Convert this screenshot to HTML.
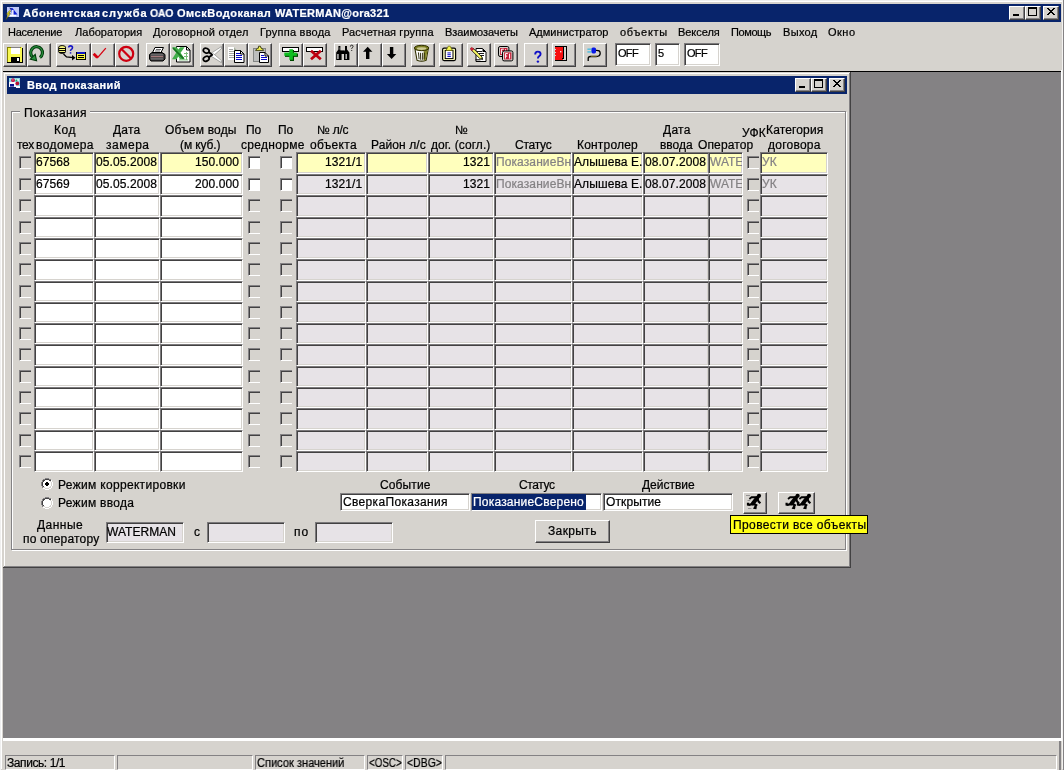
<!DOCTYPE html>
<html><head><meta charset="utf-8"><title>Ввод показаний</title>
<style>
html,body{margin:0;padding:0;}
body{width:1064px;height:770px;overflow:hidden;background:#D6D3CE;position:relative;font-family:"Liberation Sans",sans-serif;font-size:12px;}
div,span{box-sizing:content-box;}
.t{position:absolute;white-space:nowrap;overflow:visible;will-change:transform;-webkit-text-stroke:0.22px;}
.sk{position:absolute;border-style:solid;border-width:1px;border-color:#7B797B #fff #fff #7B797B;box-shadow:inset 1px 1px 0 #424142, inset -1px -1px 0 #D6D3CE;overflow:hidden;}
.sk2{position:absolute;border-style:solid;border-width:1px;border-color:#848284 #fff #fff #848284;box-shadow:inset 1px 1px 0 #424142, inset -1px -1px 0 #D6D3CE;overflow:hidden;}
.rb{position:absolute;border-style:solid;border-width:1px;border-color:#fff #424142 #424142 #fff;box-shadow:inset -1px -1px 0 #848284;background:#D6D3CE;overflow:hidden;}
.cb{position:absolute;width:11px;height:11px;border-style:solid;border-width:1px 0 1px 1px;border-color:#848284 #fff #fff #848284;box-shadow:inset 1px 1px 0 #424142;}
.capb{position:absolute;width:14px;height:12px;border-style:solid;border-width:1px;border-color:#fff #424142 #424142 #fff;box-shadow:inset -1px -1px 0 #848284, inset 1px 1px 0 #D6D3CE;background:#D6D3CE;}
.ft{position:absolute;white-space:nowrap;font-size:12px;line-height:14px;top:2px;letter-spacing:0.1px;will-change:transform;-webkit-text-stroke:0.22px;}
svg{position:absolute;overflow:visible;}
</style></head><body>

<div class="" style="position:absolute;left:0px;top:0px;width:1064px;height:770px;background:#D6D3CE;"></div>
<div class="" style="position:absolute;left:0px;top:0px;width:1064px;height:1px;background:#EFEFEF;"></div>
<div class="" style="position:absolute;left:0px;top:0px;width:1px;height:770px;background:#EFEFEF;"></div>
<div class="" style="position:absolute;left:1px;top:1px;width:1062px;height:1px;background:#FFFFFF;"></div>
<div class="" style="position:absolute;left:1px;top:1px;width:1px;height:768px;background:#FFFFFF;"></div>
<div class="" style="position:absolute;left:1063px;top:0px;width:1px;height:770px;background:#848284;"></div>
<div class="" style="position:absolute;left:1062px;top:1px;width:1px;height:768px;background:#F3F2F0;"></div>
<div class="" style="position:absolute;left:3px;top:4px;width:1058px;height:18px;background:#08246B;"></div>
<span class="t " style="left:22.60px;top:7px;font-size:11px;line-height:13px;color:#fff;font-weight:bold;letter-spacing:0.678px;">Абонентская</span>
<span class="t " style="left:102.25px;top:7px;font-size:11px;line-height:13px;color:#fff;font-weight:bold;letter-spacing:0.963px;">служба</span>
<span class="t " style="left:150.10px;top:7px;font-size:11px;line-height:13px;color:#fff;font-weight:bold;letter-spacing:0.000px;transform:scaleX(0.9518);transform-origin:0 0;">ОАО</span>
<span class="t " style="left:177.25px;top:7px;font-size:11px;line-height:13px;color:#fff;font-weight:bold;letter-spacing:0.507px;">ОмскВодоканал</span>
<span class="t " style="left:274.50px;top:7px;font-size:11px;line-height:13px;color:#fff;font-weight:bold;letter-spacing:0.275px;">WATERMAN@ora321</span>
<div class="capb" style="left:1009px;top:6px;">
<div style="position:absolute;left:3px;top:7px;width:6px;height:2px;background:#000"></div>
</div>
<div class="capb" style="left:1025px;top:6px;">
<div style="position:absolute;left:2px;top:0px;width:7px;height:6px;border:1px solid #000;border-top-width:2px;"></div>
</div>
<div class="capb" style="left:1043px;top:6px;">
<svg width="8" height="7" style="left:3px;top:1px" viewBox="0 0 8 7" shape-rendering="crispEdges"><path d="M0 0h2v1h1v1h2v-1h1v-1h2v1h-1v1h-1v1h-1v1h1v1h1v1h1v1h-2v-1h-1v-1h-2v1h-1v1h-2v-1h1v-1h1v-1h1v-1h-1v-1h-1v-1h-1z" fill="#000"/></svg>
</div>
<span class="t " style="left:8.25px;top:26px;font-size:11px;line-height:13px;color:#000;letter-spacing:-0.242px;">Население</span>
<span class="t " style="left:74.50px;top:26px;font-size:11px;line-height:13px;color:#000;letter-spacing:0.025px;">Лаборатория</span>
<span class="t " style="left:153.25px;top:26px;font-size:11px;line-height:13px;color:#000;letter-spacing:0.228px;">Договорной отдел</span>
<span class="t " style="left:260.00px;top:26px;font-size:11px;line-height:13px;color:#000;letter-spacing:0.236px;">Группа ввода</span>
<span class="t " style="left:342.00px;top:26px;font-size:11px;line-height:13px;color:#000;letter-spacing:0.118px;">Расчетная группа</span>
<span class="t " style="left:445.00px;top:26px;font-size:11px;line-height:13px;color:#000;letter-spacing:-0.050px;">Взаимозачеты</span>
<span class="t " style="left:529.00px;top:26px;font-size:11px;line-height:13px;color:#000;letter-spacing:0.010px;">Администратор</span>
<span class="t " style="left:620.00px;top:26px;font-size:11px;line-height:13px;color:#000;letter-spacing:0.719px;">объекты</span>
<span class="t " style="left:678.25px;top:26px;font-size:11px;line-height:13px;color:#000;letter-spacing:-0.047px;">Векселя</span>
<span class="t " style="left:731.00px;top:26px;font-size:11px;line-height:13px;color:#000;letter-spacing:-0.400px;">Помощь</span>
<span class="t " style="left:782.50px;top:26px;font-size:11px;line-height:13px;color:#000;letter-spacing:0.332px;">Выход</span>
<span class="t " style="left:827.75px;top:26px;font-size:11px;line-height:13px;color:#000;letter-spacing:0.479px;">Окно</span>
<div class="rb" style="left:3px;top:43px;width:22px;height:22px;"><svg width="22" height="22" viewBox="4 44 22 22" style="left:0px;top:0px" shape-rendering="crispEdges"><path d="M7 47h14l2 2v14h-16z" fill="#000"/><path d="M7 47h14l1 1v14h-15z" fill="#F7F752"/><rect x="7" y="47" width="1" height="15" fill="#848200"/><rect x="7" y="47" width="14" height="1" fill="#848200"/><rect x="11" y="47" width="9" height="7" fill="#fff"/><rect x="11" y="47" width="9" height="1" fill="#848284"/><rect x="11" y="57" width="9" height="5" fill="#000"/><rect x="17" y="58" width="2" height="3" fill="#fff"/></svg></div>
<div class="rb" style="left:27px;top:43px;width:22px;height:22px;"><svg width="22" height="22" viewBox="28 44 22 22" style="left:0px;top:0px"><path d="M39.9 57.5 A5.9 5.9 0 1 0 32.4 56.8" stroke="#00390A" stroke-width="3.2" fill="none"/><path d="M39.9 57.5 A5.9 5.9 0 1 0 32.4 56.8" stroke="#2B9340" stroke-width="1.2" fill="none"/><path d="M35.2 54.3 L30.3 59.2 L36.6 60.7 Z" fill="#2B9340" stroke="#00390A" stroke-width="1.1" stroke-linejoin="miter"/></svg></div>
<div class="rb" style="left:56px;top:43px;width:33px;height:22px;"><svg width="33" height="22" viewBox="57 44 33 22" style="left:0px;top:0px"><path d="M58.7 47.2 q0 -1.6 3.4 -1.6 q3.4 0 3.4 1.6 v4.6 q0 1.6 -3.4 1.6 q-3.4 0 -3.4 -1.6z" fill="#F7F77B" stroke="#000" stroke-width="1"/><rect x="59" y="48" width="6" height="1" fill="#000"/><rect x="59" y="50" width="6" height="1" fill="#000"/><rect x="59" y="52" width="6" height="1" fill="#000"/><path d="M68.7 47.6 q0 -1.7 1.8 -1.7 q2 0 2 1.7 q0 1.2 -1.1 1.8 q-.9 .5 -.9 1.6" stroke="#1818C6" stroke-width="1.6" fill="none"/><rect x="69.8" y="52.2" width="1.5" height="1.4" fill="#1818C6"/><path d="M63.5 54 l3 3 l7 0.7" stroke="#000" stroke-width="1.3" fill="none"/><path d="M72 55 l3.5 2.8 l-3.5 2.8z" fill="#000"/><rect x="76" y="52" width="10" height="8" fill="#000"/><rect x="77" y="52" width="8" height="2" fill="#1018C6"/><rect x="77" y="54" width="8" height="5" fill="#F7F742"/><rect x="78" y="55" width="6" height="1" fill="#000"/><rect x="78" y="57" width="6" height="1" fill="#000"/></svg></div>
<div class="rb" style="left:91px;top:43px;width:22px;height:22px;"><svg width="22" height="22" viewBox="92 44 22 22" style="left:0px;top:0px"><path d="M97.2 58.2 L105.8 48.2" stroke="#D60010" stroke-width="1.3" fill="none"/><path d="M93.6 53.8 L97.4 57.6" stroke="#D60010" stroke-width="2.8" fill="none"/></svg></div>
<div class="rb" style="left:115px;top:43px;width:22px;height:22px;"><svg width="22" height="22" viewBox="116 44 22 22" style="left:0px;top:0px"><circle cx="126.2" cy="53.8" r="7" stroke="#CE0010" stroke-width="2.2" fill="none"/><path d="M121.2 48.8 L131.2 58.8" stroke="#CE0010" stroke-width="2.2"/></svg></div>
<div class="rb" style="left:146px;top:43px;width:22px;height:22px;"><svg width="22" height="22" viewBox="147 44 22 22" style="left:0px;top:0px"><path d="M152.5 52.5 L155 47.5 L163.5 47.5 L161 52.5Z" fill="#fff" stroke="#000" stroke-width="1"/><path d="M156 49.5h5M155 51h5" stroke="#424142" stroke-width=".8"/><path d="M149.5 54.5 L152 52.5 L162 52.5 L165 54.5 L165 59 L163 61 L151 61 L149.5 59Z" fill="#424142" stroke="#000" stroke-width="1"/><rect x="151" y="56" width="12" height="1.2" fill="#A5797B"/><rect x="151" y="58.4" width="12" height="1" fill="#848284"/><rect x="151" y="54.4" width="12" height="0.9" fill="#848284"/></svg></div>
<div class="rb" style="left:170px;top:43px;width:22px;height:22px;"><svg width="22" height="22" viewBox="171 44 22 22" style="left:0px;top:0px"><path d="M176.5 46.5 h10 l3.5 3.5 v12 h-13.5z" fill="#fff" stroke="#000" stroke-width="1"/><path d="M186.5 46.5 v3.5 h3.5" fill="none" stroke="#000" stroke-width="1"/><rect x="184" y="53" width="4" height="1" fill="#7BBE7B"/><rect x="184" y="56" width="4" height="1" fill="#7BBE7B"/><rect x="179" y="59.4" width="9" height="1" fill="#7BBE7B"/><rect x="186" y="52" width="1" height="8" fill="#7BBE7B"/><path d="M172 47.2 L176.6 47.2 L178.4 49.6 L180.2 47.2 L184.6 47.2 L180.6 52.8 L184.8 59.2 L180 59.2 L178.3 56.4 L176.6 59.2 L172 59.2 L176.1 52.8Z" fill="#42AE4A"/><path d="M173 48 L183.6 58.6" stroke="#187321" stroke-width="1.7"/></svg></div>
<div class="rb" style="left:200px;top:43px;width:22px;height:22px;"><svg width="22" height="22" viewBox="201 44 22 22" style="left:0px;top:0px"><path d="M210.6 53.6 L221.4 46.6 L221.4 48.6 L213.6 55.6Z" fill="#fff" stroke="#636563" stroke-width=".5"/><path d="M210.6 55.8 L213.6 53.8 L221.4 60.6 L221.4 62.6Z" fill="#fff" stroke="#636563" stroke-width=".5"/><ellipse cx="206.2" cy="50.6" rx="3" ry="2.3" stroke="#000" stroke-width="1.7" fill="none" transform="rotate(25 206.2 50.6)"/><ellipse cx="206.2" cy="58.8" rx="3" ry="2.3" stroke="#000" stroke-width="1.7" fill="none" transform="rotate(-25 206.2 58.8)"/><path d="M208.6 52 L212.6 55 M208.6 57.4 L212.6 54.4" stroke="#000" stroke-width="1.9"/></svg></div>
<div class="rb" style="left:224px;top:43px;width:22px;height:22px;"><svg width="22" height="22" viewBox="225 44 22 22" style="left:0px;top:0px"><path d="M228 47 h6 l3 3 v10 h-9z" fill="#fff"/><path d="M234 47 l3 3 h-3z" fill="#A5AE9C"/><rect x="229" y="49" width="4" height="1" fill="#A5A6A5"/><rect x="229" y="51" width="5" height="1" fill="#A5A6A5"/><rect x="229" y="53" width="5" height="1" fill="#A5A6A5"/><rect x="229" y="55" width="5" height="1" fill="#A5A6A5"/><rect x="229" y="57" width="5" height="1" fill="#A5A6A5"/><path d="M234.5 50.5 h6 l3.5 3.5 v8.5 h-9.5z" fill="#fff" stroke="#000" stroke-width="1"/><path d="M240.5 50.5 v3.5 h3.5" fill="none" stroke="#000" stroke-width="1"/><rect x="236" y="53" width="4" height="1" fill="#0808C6"/><rect x="236" y="55" width="6" height="1" fill="#0808C6"/><rect x="236" y="57" width="6" height="1" fill="#0808C6"/><rect x="236" y="59" width="6" height="1" fill="#0808C6"/></svg></div>
<div class="rb" style="left:248px;top:43px;width:22px;height:22px;"><svg width="22" height="22" viewBox="249 44 22 22" style="left:0px;top:0px"><rect x="253" y="48" width="13" height="14" fill="#848684"/><rect x="254" y="49" width="11" height="12" fill="#BDBEBD"/><path d="M255.6 50.4 L257.4 48.2 h1 L258.6 46.2 h1.8 L261 48.2 h1 L263.6 50.4Z" fill="#F7F752" stroke="#212100" stroke-width=".8"/><path d="M259.5 52.5 h5.5 l3.5 3.5 v6.5 h-9z" fill="#fff" stroke="#000" stroke-width="1"/><path d="M265 52.5 v3.5 h3.5" fill="none" stroke="#000" stroke-width="1"/><rect x="261" y="55" width="3" height="1" fill="#0808C6"/><rect x="261" y="57" width="6" height="1" fill="#0808C6"/><rect x="261" y="59" width="6" height="1" fill="#0808C6"/></svg></div>
<div class="rb" style="left:279px;top:43px;width:22px;height:22px;"><svg width="22" height="22" viewBox="280 44 22 22" style="left:0px;top:0px"><rect x="282" y="47" width="17" height="5" fill="#000"/><rect x="283" y="48" width="15" height="3" fill="#fff"/><rect x="285" y="53.5" width="13" height="3.4" fill="#004A00"/><rect x="290" y="50" width="4" height="11" fill="#004A00"/><rect x="284.3" y="52.6" width="12.5" height="3.2" fill="#10BE21"/><rect x="289.3" y="49.2" width="3.6" height="10.6" fill="#10BE21"/></svg></div>
<div class="rb" style="left:303px;top:43px;width:22px;height:22px;"><svg width="22" height="22" viewBox="304 44 22 22" style="left:0px;top:0px"><rect x="306" y="47" width="17" height="5" fill="#000"/><rect x="307" y="48" width="15" height="3" fill="#fff"/><path d="M311 50.8 L320.8 59.2 M320.8 50.8 L311 59.2" stroke="#BD0010" stroke-width="2.8"/></svg></div>
<div class="rb" style="left:334px;top:43px;width:22px;height:22px;"><svg width="22" height="22" viewBox="335 44 22 22" style="left:0px;top:0px"><path d="M338.4 46 h2 v4 l1.2 1.6 v8.4 h-5.4 v-7.6 l2.2-3z" fill="#000"/><path d="M345 46 h2 v3.4 l2.4 3 v7.6 h-5.4 v-8.4 l1-1.6z" fill="#000"/><rect x="341" y="50.4" width="3.4" height="3.6" fill="#000"/><rect x="337.4" y="54" width="1.1" height="5" fill="#fff"/><rect x="345.6" y="54" width="1.1" height="5" fill="#fff"/><rect x="339.6" y="47.4" width="0.8" height="2.4" fill="#9C9E9C"/><path d="M350.4 46.6 q0 -1.5 1.3 -1.5 q1.4 0 1.4 1.3 q0 .9 -1.3 1.6 v.8" stroke="#000" stroke-width=".8" fill="none"/><rect x="351.3" y="50" width="0.9" height="0.9" fill="#000"/></svg></div>
<div class="rb" style="left:358px;top:43px;width:22px;height:22px;"><svg width="22" height="22" viewBox="359 44 22 22" style="left:0px;top:0px"><path d="M367.7 46.8 L372.4 51.8 L369.4 51.8 L369.4 59 L366 59 L366 51.8 L363 51.8Z" fill="#000"/></svg></div>
<div class="rb" style="left:382px;top:43px;width:22px;height:22px;"><svg width="22" height="22" viewBox="383 44 22 22" style="left:0px;top:0px"><path d="M391.6 59 L396.3 54 L393.3 54 L393.3 47 L389.9 47 L389.9 54 L386.9 54Z" fill="#000"/></svg></div>
<div class="rb" style="left:411px;top:43px;width:22px;height:22px;"><svg width="22" height="22" viewBox="412 44 22 22" style="left:0px;top:0px"><path d="M415 49 L417 60.2 q4.6 1.8 9.2 0 L428.2 49Z" fill="#fff" stroke="#313000" stroke-width="1.1"/><path d="M423.6 50.6 L427.8 49.4 L425.8 59.9 q-1 .5 -2.2 .7z" fill="#84862A"/><ellipse cx="421.6" cy="48" rx="7.2" ry="2.7" fill="#7B7D21" stroke="#313000" stroke-width="1"/><ellipse cx="421.6" cy="48.6" rx="4.8" ry="1.3" fill="#CECB94"/><path d="M418.4 52.4 l.7 6.8 M420.4 52.8 l.3 7 M422.4 52.8 v7 M424.4 52.6 l-.3 6.8" stroke="#212000" stroke-width=".9"/></svg></div>
<div class="rb" style="left:439px;top:43px;width:22px;height:22px;"><svg width="22" height="22" viewBox="440 44 22 22" style="left:0px;top:0px"><rect x="442.6" y="48.2" width="13" height="12.4" rx="1.5" fill="#FFFFBD" stroke="#000" stroke-width="1.2"/><rect x="445.2" y="50.4" width="7.8" height="8.2" fill="#fff" stroke="#000" stroke-width="1"/><path d="M446 50.4 L447.6 47.6 L448.2 46.2 h2 l.6 1.4 L452.4 50.4Z" fill="#F7F752" stroke="#636300" stroke-width=".7"/><rect x="447.4" y="52.4" width="3.4" height="1" fill="#1010C6"/><rect x="447.4" y="54.2" width="3.4" height="1" fill="#1010C6"/><rect x="447.4" y="56" width="3.4" height="1" fill="#1010C6"/></svg></div>
<div class="rb" style="left:467px;top:43px;width:22px;height:22px;"><svg width="22" height="22" viewBox="468 44 22 22" style="left:0px;top:0px"><path d="M476 48.5 h6.5 l3.5 3.5 v9.5 h-10z" fill="#fff" stroke="#000" stroke-width="1"/><path d="M482.5 48.5 v3.5 h3.5z" fill="#000"/><rect x="477" y="51" width="5" height="0.9" fill="#000"/><rect x="479" y="53" width="5" height="0.9" fill="#000"/><rect x="480" y="55" width="4" height="0.9" fill="#000"/><rect x="475.5" y="59.3" width="5" height="1" fill="#000"/><path d="M471.6 50.4 L473.4 48.6 L482 57 L482.6 59.6 L480 58.8Z" fill="#F7F763" stroke="#000" stroke-width=".8"/><path d="M470.3 49 q.2 -1.4 1.6 -1.6 L473.8 49 L472 50.8Z" fill="#D62031" stroke="#94182A" stroke-width=".6"/><path d="M481 58.2 L482.6 59.6 L482.2 57.6Z" fill="#000"/></svg></div>
<div class="rb" style="left:494px;top:43px;width:22px;height:22px;"><svg width="22" height="22" viewBox="495 44 22 22" style="left:0px;top:0px"><rect x="498.5" y="46.5" width="10.4" height="10" rx="1.6" fill="#D6D3CE" stroke="#000" stroke-width="1"/><rect x="500" y="48" width="7.4" height="7" fill="#C62039"/><path d="M501.4 54.2 v-5 h2.4 M501.4 51.7 h1.8 M505.6 49.2 v5" stroke="#fff" stroke-width="1" fill="none"/><rect x="502.5" y="50.9" width="10.4" height="10" rx="1.6" fill="#D6D3CE" stroke="#000" stroke-width="1"/><rect x="504" y="52.4" width="7.4" height="7" fill="#C62039"/><path d="M505.4 58.599999999999994 v-5 h2.4 M505.4 56.1 h1.8 M509.6 53.6 v5" stroke="#fff" stroke-width="1" fill="none"/></svg></div>
<div class="rb" style="left:524px;top:43px;width:22px;height:22px;"><svg width="22" height="22" viewBox="525 44 22 22" style="left:0px;top:0px"><path d="M535.2 54.4 q0 -2.8 2.6 -2.8 q2.8 0 2.8 2.5 q0 1.5 -1.6 2.3 q-1.1 .6 -1.1 2.2" stroke="#1010C6" stroke-width="1.9" fill="none"/><circle cx="537.9" cy="61.6" r="1.2" fill="#1010C6"/></svg></div>
<div class="rb" style="left:552px;top:43px;width:22px;height:22px;"><svg width="22" height="22" viewBox="553 44 22 22" style="left:0px;top:0px"><rect x="555" y="46" width="12" height="15" fill="#000"/><rect x="556" y="47" width="10" height="13" fill="#D6D3CE"/><rect x="555" y="47" width="8" height="13" fill="#F71010"/><rect x="563" y="47" width="1" height="12" fill="#000"/><rect x="555" y="49" width="1" height="1" fill="#D6D3CE"/><rect x="555" y="52" width="1" height="1" fill="#D6D3CE"/><rect x="555" y="55" width="1" height="1" fill="#D6D3CE"/><rect x="560" y="51" width="1.4" height="1.4" fill="#FFD6D6"/><rect x="562" y="58" width="2" height="1" fill="#000"/></svg></div>
<div class="rb" style="left:583px;top:43px;width:22px;height:22px;"><svg width="22" height="22" viewBox="584 44 22 22" style="left:0px;top:0px"><path d="M596 50.3 q4.2 -.3 4.2 3 q0 3.2 -4 3.2 h-5.6 q-2.4 0 -2.4 2 v2.6" stroke="#000" stroke-width="1.3" fill="none"/><path d="M590.8 56.3 h6" stroke="#B5A642" stroke-width=".7"/><rect x="591.4" y="47.4" width="4.6" height="6" rx="1.6" fill="#0818E7"/><rect x="587.4" y="48.6" width="4" height="1.1" fill="#21B6E7"/><rect x="587.4" y="51.4" width="4" height="1.1" fill="#21B6E7"/></svg></div>
<div class="sk" style="left:615px;top:43px;width:34px;height:21px;background:#fff;"><span class="ft" style="left:2px;top:2px;font-size:11px;letter-spacing:-0.7px;">OFF</span></div>
<div class="sk" style="left:655px;top:43px;width:23px;height:21px;background:#fff;"><span class="ft" style="left:2px;top:2px;font-size:11px;letter-spacing:-0.7px;">5</span></div>
<div class="sk" style="left:684px;top:43px;width:34px;height:21px;background:#fff;"><span class="ft" style="left:2px;top:2px;font-size:11px;letter-spacing:-0.7px;">OFF</span></div>
<div class="" style="position:absolute;left:3px;top:71px;width:1058px;height:1px;background:#000;"></div>
<div class="" style="position:absolute;left:3px;top:72px;width:1058px;height:666px;background:#848284;"></div>
<div class="" style="position:absolute;left:1061px;top:70px;width:1px;height:670px;background:#fff;"></div>
<div class="" style="position:absolute;left:3px;top:738px;width:1059px;height:3px;background:#fff;"></div>
<div class="" style="position:absolute;left:3px;top:72px;width:848px;height:496px;background:#D6D3CE;"></div>
<div class="" style="position:absolute;left:3px;top:72px;width:848px;height:1px;background:#D6D3CE;"></div>
<div class="" style="position:absolute;left:3px;top:72px;width:1px;height:496px;background:#D6D3CE;"></div>
<div class="" style="position:absolute;left:4px;top:73px;width:846px;height:1px;background:#fff;"></div>
<div class="" style="position:absolute;left:4px;top:73px;width:1px;height:494px;background:#fff;"></div>
<div class="" style="position:absolute;left:850px;top:72px;width:1px;height:496px;background:#424142;"></div>
<div class="" style="position:absolute;left:3px;top:567px;width:848px;height:1px;background:#424142;"></div>
<div class="" style="position:absolute;left:849px;top:73px;width:1px;height:494px;background:#848284;"></div>
<div class="" style="position:absolute;left:4px;top:566px;width:846px;height:1px;background:#848284;"></div>
<div class="" style="position:absolute;left:7px;top:76px;width:840px;height:18px;background:#08246B;"></div>
<span class="t " style="left:26.50px;top:79px;font-size:11px;line-height:13px;color:#fff;font-weight:bold;letter-spacing:0.430px;">Ввод показаний</span>
<div class="capb" style="left:795px;top:78px;">
<div style="position:absolute;left:3px;top:7px;width:6px;height:2px;background:#000"></div>
</div>
<div class="capb" style="left:811px;top:78px;">
<div style="position:absolute;left:2px;top:0px;width:7px;height:6px;border:1px solid #000;border-top-width:2px;"></div>
</div>
<div class="capb" style="left:829px;top:78px;">
<svg width="8" height="7" style="left:3px;top:1px" viewBox="0 0 8 7" shape-rendering="crispEdges"><path d="M0 0h2v1h1v1h2v-1h1v-1h2v1h-1v1h-1v1h-1v1h1v1h1v1h1v1h-2v-1h-1v-1h-2v1h-1v1h-2v-1h1v-1h1v-1h1v-1h-1v-1h-1v-1h-1z" fill="#000"/></svg>
</div>
<svg width="18" height="16" viewBox="4 5 18 16" style="left:4px;top:5px"><rect x="7" y="7" width="12" height="10" fill="#BDC7F7"/><path d="M11 8 L12.4 8 L17.6 14.6 L12.2 14.6Z" fill="#1020D6"/><path d="M9.6 7.2 L12 9.4 L10 9.6Z" fill="#08106B"/><rect x="10" y="15" width="6" height="1.4" fill="#fff"/><rect x="12" y="10" width="1.6" height="5" fill="#E7E7FF"/><path d="M9.6 10.6 L6.4 14.2 L8.2 14.4 L6 19.6 L10.4 13.6 L8.6 13.4 L10.8 11Z" fill="#F7EF21" stroke="#524A00" stroke-width=".5"/></svg>
<svg width="14" height="14" viewBox="8 76 14 14" style="left:8px;top:76px"><rect x="9" y="78" width="11" height="9" fill="#8CD7E7"/><rect x="9" y="82" width="7" height="5" fill="#F7F7FF"/><rect x="16" y="86" width="4" height="2" fill="#F7F7FF"/><rect x="15" y="79" width="4" height="2" fill="#D6F7EF"/><circle cx="13" cy="80.2" r="1.9" fill="#C61042"/><circle cx="17.3" cy="83.4" r="1.9" fill="#B51031"/><rect x="12.4" y="79.4" width="1" height="1" fill="#FFB6D6"/><rect x="10" y="84" width="4" height="2.6" fill="#08108C"/><circle cx="16.4" cy="80.6" r="1" fill="#21A66B"/></svg>
<div style="position:absolute;left:11px;top:111px;width:833px;height:437px;border:1px solid #848284;box-shadow:1px 1px 0 #fff, inset 1px 1px 0 #fff;"></div>
<div class="" style="position:absolute;left:20px;top:106px;width:70px;height:12px;background:#D6D3CE;"></div>
<span class="t " style="left:23.90px;top:106px;font-size:12px;line-height:14px;color:#000;letter-spacing:0.405px;">Показания</span>
<span class="t " style="left:53.90px;top:123px;font-size:12px;line-height:14px;color:#000;letter-spacing:0.597px;">Код</span>
<span class="t " style="left:17.00px;top:138px;font-size:12px;line-height:14px;color:#000;letter-spacing:-0.241px;">тех</span>
<span class="t " style="left:35.50px;top:138px;font-size:12px;line-height:14px;color:#000;letter-spacing:0.413px;">водомера</span>
<span class="t " style="left:113.25px;top:123px;font-size:12px;line-height:14px;color:#000;letter-spacing:0.224px;">Дата</span>
<span class="t " style="left:105.50px;top:138px;font-size:12px;line-height:14px;color:#000;letter-spacing:0.509px;">замера</span>
<span class="t " style="left:165.30px;top:123px;font-size:12px;line-height:14px;color:#000;letter-spacing:0.184px;">Объем воды</span>
<span class="t " style="left:179.90px;top:138px;font-size:12px;line-height:14px;color:#000;letter-spacing:-0.102px;">(м куб.)</span>
<span class="t " style="left:246.40px;top:123px;font-size:12px;line-height:14px;color:#000;letter-spacing:-0.013px;">По</span>
<span class="t " style="left:241.10px;top:138px;font-size:12px;line-height:14px;color:#000;letter-spacing:0.302px;">среднорме</span>
<span class="t " style="left:278.40px;top:123px;font-size:12px;line-height:14px;color:#000;letter-spacing:-0.112px;">По</span>
<span class="t " style="left:317.00px;top:123px;font-size:12px;line-height:14px;color:#000;letter-spacing:-0.262px;">№ л/с</span>
<span class="t " style="left:310.10px;top:138px;font-size:12px;line-height:14px;color:#000;letter-spacing:0.317px;">объекта</span>
<span class="t " style="left:371.00px;top:138px;font-size:12px;line-height:14px;color:#000;letter-spacing:0.093px;">Район л/с</span>
<span class="t " style="left:454.50px;top:123px;font-size:12px;line-height:14px;color:#000;letter-spacing:0.000px;">№</span>
<span class="t " style="left:431.40px;top:138px;font-size:12px;line-height:14px;color:#000;letter-spacing:0.076px;">дог. (согл.)</span>
<span class="t " style="left:515.10px;top:138px;font-size:12px;line-height:14px;color:#000;letter-spacing:-0.258px;">Статус</span>
<span class="t " style="left:577.00px;top:138px;font-size:12px;line-height:14px;color:#000;letter-spacing:0.189px;">Контролер</span>
<span class="t " style="left:662.50px;top:123px;font-size:12px;line-height:14px;color:#000;letter-spacing:0.274px;">Дата</span>
<span class="t " style="left:660.10px;top:138px;font-size:12px;line-height:14px;color:#000;letter-spacing:-0.013px;">ввода</span>
<span class="t " style="left:698.25px;top:138px;font-size:12px;line-height:14px;color:#000;letter-spacing:0.134px;">Оператор</span>
<span class="t " style="left:742.00px;top:126px;font-size:12px;line-height:14px;color:#000;letter-spacing:0.203px;">УФК</span>
<span class="t " style="left:765.75px;top:123px;font-size:12px;line-height:14px;color:#000;letter-spacing:0.143px;">Категория</span>
<span class="t " style="left:767.50px;top:138px;font-size:12px;line-height:14px;color:#000;letter-spacing:0.238px;">договора</span>
<div class="sk" style="left:34px;top:152px;width:58px;height:20px;background:#FFFFBD;"><span class="ft" style="left:1px;color:#000">67568</span></div>
<div class="sk" style="left:94px;top:152px;width:64px;height:20px;background:#FFFFBD;"><span class="ft" style="left:1px;color:#000">05.05.2008</span></div>
<div class="sk" style="left:160px;top:152px;width:81px;height:20px;background:#FFFFBD;"><span class="ft" style="right:2.5px;color:#000">150.000</span></div>
<div class="sk" style="left:296px;top:152px;width:68px;height:20px;background:#FFFFBD;"><span class="ft" style="right:2.5px;color:#000">1321/1</span></div>
<div class="sk" style="left:366px;top:152px;width:60px;height:20px;background:#FFFFBD;"></div>
<div class="sk" style="left:428px;top:152px;width:64px;height:20px;background:#FFFFBD;"><span class="ft" style="right:2.5px;color:#000">1321</span></div>
<div class="sk" style="left:494px;top:152px;width:76px;height:20px;background:#FFFFBD;"><span class="ft" style="left:1px;color:#848284">ПоказаниеВн</span></div>
<div class="sk" style="left:572px;top:152px;width:69px;height:20px;background:#FFFFBD;"><span class="ft" style="left:1px;color:#000">Алышева Е.</span></div>
<div class="sk" style="left:643px;top:152px;width:64px;height:20px;background:#FFFFBD;"><span class="ft" style="left:1px;color:#000">08.07.2008</span></div>
<div class="sk" style="left:708px;top:152px;width:33px;height:20px;background:#FFFFBD;"><span class="ft" style="left:0.5px;letter-spacing:0;color:#848284">WATERMAN</span></div>
<div class="sk" style="left:760px;top:152px;width:66px;height:20px;background:#FFFFBD;"><span class="ft" style="left:1px;color:#848284">УК</span></div>
<div class="cb" style="left:19px;top:156px;background:#D6D3CE;"></div>
<div class="cb" style="left:248px;top:156px;background:#fff;"></div>
<div class="cb" style="left:280px;top:156px;background:#fff;"></div>
<div class="cb" style="left:747px;top:156px;background:#D6D3CE;"></div>
<div class="sk" style="left:34px;top:174px;width:58px;height:19px;background:#fff;"><span class="ft" style="left:1px;color:#000">67569</span></div>
<div class="sk" style="left:94px;top:174px;width:64px;height:19px;background:#fff;"><span class="ft" style="left:1px;color:#000">05.05.2008</span></div>
<div class="sk" style="left:160px;top:174px;width:81px;height:19px;background:#fff;"><span class="ft" style="right:2.5px;color:#000">200.000</span></div>
<div class="sk" style="left:296px;top:174px;width:68px;height:19px;background:#E7E3E7;"><span class="ft" style="right:2.5px;color:#000">1321/1</span></div>
<div class="sk" style="left:366px;top:174px;width:60px;height:19px;background:#E7E3E7;"></div>
<div class="sk" style="left:428px;top:174px;width:64px;height:19px;background:#E7E3E7;"><span class="ft" style="right:2.5px;color:#000">1321</span></div>
<div class="sk" style="left:494px;top:174px;width:76px;height:19px;background:#E7E3E7;"><span class="ft" style="left:1px;color:#848284">ПоказаниеВн</span></div>
<div class="sk" style="left:572px;top:174px;width:69px;height:19px;background:#E7E3E7;"><span class="ft" style="left:1px;color:#000">Алышева Е.</span></div>
<div class="sk" style="left:643px;top:174px;width:64px;height:19px;background:#E7E3E7;"><span class="ft" style="left:1px;color:#000">08.07.2008</span></div>
<div class="sk" style="left:708px;top:174px;width:33px;height:19px;background:#E7E3E7;"><span class="ft" style="left:0.5px;letter-spacing:0;color:#848284">WATERMAN</span></div>
<div class="sk" style="left:760px;top:174px;width:66px;height:19px;background:#E7E3E7;"><span class="ft" style="left:1px;color:#848284">УК</span></div>
<div class="cb" style="left:19px;top:178px;background:#D6D3CE;"></div>
<div class="cb" style="left:248px;top:178px;background:#fff;"></div>
<div class="cb" style="left:280px;top:178px;background:#fff;"></div>
<div class="cb" style="left:747px;top:178px;background:#D6D3CE;"></div>
<div class="sk" style="left:34px;top:195px;width:58px;height:20px;background:#fff;"></div>
<div class="sk" style="left:94px;top:195px;width:64px;height:20px;background:#fff;"></div>
<div class="sk" style="left:160px;top:195px;width:81px;height:20px;background:#fff;"></div>
<div class="sk" style="left:296px;top:195px;width:68px;height:20px;background:#E7E3E7;"></div>
<div class="sk" style="left:366px;top:195px;width:60px;height:20px;background:#E7E3E7;"></div>
<div class="sk" style="left:428px;top:195px;width:64px;height:20px;background:#E7E3E7;"></div>
<div class="sk" style="left:494px;top:195px;width:76px;height:20px;background:#E7E3E7;"></div>
<div class="sk" style="left:572px;top:195px;width:69px;height:20px;background:#E7E3E7;"></div>
<div class="sk" style="left:643px;top:195px;width:64px;height:20px;background:#E7E3E7;"></div>
<div class="sk" style="left:708px;top:195px;width:33px;height:20px;background:#E7E3E7;"></div>
<div class="sk" style="left:760px;top:195px;width:66px;height:20px;background:#E7E3E7;"></div>
<div class="cb" style="left:19px;top:199px;background:#D6D3CE;"></div>
<div class="cb" style="left:248px;top:199px;background:#D6D3CE;"></div>
<div class="cb" style="left:280px;top:199px;background:#D6D3CE;"></div>
<div class="cb" style="left:747px;top:199px;background:#D6D3CE;"></div>
<div class="sk" style="left:34px;top:217px;width:58px;height:19px;background:#fff;"></div>
<div class="sk" style="left:94px;top:217px;width:64px;height:19px;background:#fff;"></div>
<div class="sk" style="left:160px;top:217px;width:81px;height:19px;background:#fff;"></div>
<div class="sk" style="left:296px;top:217px;width:68px;height:19px;background:#E7E3E7;"></div>
<div class="sk" style="left:366px;top:217px;width:60px;height:19px;background:#E7E3E7;"></div>
<div class="sk" style="left:428px;top:217px;width:64px;height:19px;background:#E7E3E7;"></div>
<div class="sk" style="left:494px;top:217px;width:76px;height:19px;background:#E7E3E7;"></div>
<div class="sk" style="left:572px;top:217px;width:69px;height:19px;background:#E7E3E7;"></div>
<div class="sk" style="left:643px;top:217px;width:64px;height:19px;background:#E7E3E7;"></div>
<div class="sk" style="left:708px;top:217px;width:33px;height:19px;background:#E7E3E7;"></div>
<div class="sk" style="left:760px;top:217px;width:66px;height:19px;background:#E7E3E7;"></div>
<div class="cb" style="left:19px;top:221px;background:#D6D3CE;"></div>
<div class="cb" style="left:248px;top:221px;background:#D6D3CE;"></div>
<div class="cb" style="left:280px;top:221px;background:#D6D3CE;"></div>
<div class="cb" style="left:747px;top:221px;background:#D6D3CE;"></div>
<div class="sk" style="left:34px;top:238px;width:58px;height:19px;background:#fff;"></div>
<div class="sk" style="left:94px;top:238px;width:64px;height:19px;background:#fff;"></div>
<div class="sk" style="left:160px;top:238px;width:81px;height:19px;background:#fff;"></div>
<div class="sk" style="left:296px;top:238px;width:68px;height:19px;background:#E7E3E7;"></div>
<div class="sk" style="left:366px;top:238px;width:60px;height:19px;background:#E7E3E7;"></div>
<div class="sk" style="left:428px;top:238px;width:64px;height:19px;background:#E7E3E7;"></div>
<div class="sk" style="left:494px;top:238px;width:76px;height:19px;background:#E7E3E7;"></div>
<div class="sk" style="left:572px;top:238px;width:69px;height:19px;background:#E7E3E7;"></div>
<div class="sk" style="left:643px;top:238px;width:64px;height:19px;background:#E7E3E7;"></div>
<div class="sk" style="left:708px;top:238px;width:33px;height:19px;background:#E7E3E7;"></div>
<div class="sk" style="left:760px;top:238px;width:66px;height:19px;background:#E7E3E7;"></div>
<div class="cb" style="left:19px;top:242px;background:#D6D3CE;"></div>
<div class="cb" style="left:248px;top:242px;background:#D6D3CE;"></div>
<div class="cb" style="left:280px;top:242px;background:#D6D3CE;"></div>
<div class="cb" style="left:747px;top:242px;background:#D6D3CE;"></div>
<div class="sk" style="left:34px;top:259px;width:58px;height:20px;background:#fff;"></div>
<div class="sk" style="left:94px;top:259px;width:64px;height:20px;background:#fff;"></div>
<div class="sk" style="left:160px;top:259px;width:81px;height:20px;background:#fff;"></div>
<div class="sk" style="left:296px;top:259px;width:68px;height:20px;background:#E7E3E7;"></div>
<div class="sk" style="left:366px;top:259px;width:60px;height:20px;background:#E7E3E7;"></div>
<div class="sk" style="left:428px;top:259px;width:64px;height:20px;background:#E7E3E7;"></div>
<div class="sk" style="left:494px;top:259px;width:76px;height:20px;background:#E7E3E7;"></div>
<div class="sk" style="left:572px;top:259px;width:69px;height:20px;background:#E7E3E7;"></div>
<div class="sk" style="left:643px;top:259px;width:64px;height:20px;background:#E7E3E7;"></div>
<div class="sk" style="left:708px;top:259px;width:33px;height:20px;background:#E7E3E7;"></div>
<div class="sk" style="left:760px;top:259px;width:66px;height:20px;background:#E7E3E7;"></div>
<div class="cb" style="left:19px;top:263px;background:#D6D3CE;"></div>
<div class="cb" style="left:248px;top:263px;background:#D6D3CE;"></div>
<div class="cb" style="left:280px;top:263px;background:#D6D3CE;"></div>
<div class="cb" style="left:747px;top:263px;background:#D6D3CE;"></div>
<div class="sk" style="left:34px;top:281px;width:58px;height:19px;background:#fff;"></div>
<div class="sk" style="left:94px;top:281px;width:64px;height:19px;background:#fff;"></div>
<div class="sk" style="left:160px;top:281px;width:81px;height:19px;background:#fff;"></div>
<div class="sk" style="left:296px;top:281px;width:68px;height:19px;background:#E7E3E7;"></div>
<div class="sk" style="left:366px;top:281px;width:60px;height:19px;background:#E7E3E7;"></div>
<div class="sk" style="left:428px;top:281px;width:64px;height:19px;background:#E7E3E7;"></div>
<div class="sk" style="left:494px;top:281px;width:76px;height:19px;background:#E7E3E7;"></div>
<div class="sk" style="left:572px;top:281px;width:69px;height:19px;background:#E7E3E7;"></div>
<div class="sk" style="left:643px;top:281px;width:64px;height:19px;background:#E7E3E7;"></div>
<div class="sk" style="left:708px;top:281px;width:33px;height:19px;background:#E7E3E7;"></div>
<div class="sk" style="left:760px;top:281px;width:66px;height:19px;background:#E7E3E7;"></div>
<div class="cb" style="left:19px;top:285px;background:#D6D3CE;"></div>
<div class="cb" style="left:248px;top:285px;background:#D6D3CE;"></div>
<div class="cb" style="left:280px;top:285px;background:#D6D3CE;"></div>
<div class="cb" style="left:747px;top:285px;background:#D6D3CE;"></div>
<div class="sk" style="left:34px;top:302px;width:58px;height:19px;background:#fff;"></div>
<div class="sk" style="left:94px;top:302px;width:64px;height:19px;background:#fff;"></div>
<div class="sk" style="left:160px;top:302px;width:81px;height:19px;background:#fff;"></div>
<div class="sk" style="left:296px;top:302px;width:68px;height:19px;background:#E7E3E7;"></div>
<div class="sk" style="left:366px;top:302px;width:60px;height:19px;background:#E7E3E7;"></div>
<div class="sk" style="left:428px;top:302px;width:64px;height:19px;background:#E7E3E7;"></div>
<div class="sk" style="left:494px;top:302px;width:76px;height:19px;background:#E7E3E7;"></div>
<div class="sk" style="left:572px;top:302px;width:69px;height:19px;background:#E7E3E7;"></div>
<div class="sk" style="left:643px;top:302px;width:64px;height:19px;background:#E7E3E7;"></div>
<div class="sk" style="left:708px;top:302px;width:33px;height:19px;background:#E7E3E7;"></div>
<div class="sk" style="left:760px;top:302px;width:66px;height:19px;background:#E7E3E7;"></div>
<div class="cb" style="left:19px;top:306px;background:#D6D3CE;"></div>
<div class="cb" style="left:248px;top:306px;background:#D6D3CE;"></div>
<div class="cb" style="left:280px;top:306px;background:#D6D3CE;"></div>
<div class="cb" style="left:747px;top:306px;background:#D6D3CE;"></div>
<div class="sk" style="left:34px;top:323px;width:58px;height:19px;background:#fff;"></div>
<div class="sk" style="left:94px;top:323px;width:64px;height:19px;background:#fff;"></div>
<div class="sk" style="left:160px;top:323px;width:81px;height:19px;background:#fff;"></div>
<div class="sk" style="left:296px;top:323px;width:68px;height:19px;background:#E7E3E7;"></div>
<div class="sk" style="left:366px;top:323px;width:60px;height:19px;background:#E7E3E7;"></div>
<div class="sk" style="left:428px;top:323px;width:64px;height:19px;background:#E7E3E7;"></div>
<div class="sk" style="left:494px;top:323px;width:76px;height:19px;background:#E7E3E7;"></div>
<div class="sk" style="left:572px;top:323px;width:69px;height:19px;background:#E7E3E7;"></div>
<div class="sk" style="left:643px;top:323px;width:64px;height:19px;background:#E7E3E7;"></div>
<div class="sk" style="left:708px;top:323px;width:33px;height:19px;background:#E7E3E7;"></div>
<div class="sk" style="left:760px;top:323px;width:66px;height:19px;background:#E7E3E7;"></div>
<div class="cb" style="left:19px;top:327px;background:#D6D3CE;"></div>
<div class="cb" style="left:248px;top:327px;background:#D6D3CE;"></div>
<div class="cb" style="left:280px;top:327px;background:#D6D3CE;"></div>
<div class="cb" style="left:747px;top:327px;background:#D6D3CE;"></div>
<div class="sk" style="left:34px;top:344px;width:58px;height:20px;background:#fff;"></div>
<div class="sk" style="left:94px;top:344px;width:64px;height:20px;background:#fff;"></div>
<div class="sk" style="left:160px;top:344px;width:81px;height:20px;background:#fff;"></div>
<div class="sk" style="left:296px;top:344px;width:68px;height:20px;background:#E7E3E7;"></div>
<div class="sk" style="left:366px;top:344px;width:60px;height:20px;background:#E7E3E7;"></div>
<div class="sk" style="left:428px;top:344px;width:64px;height:20px;background:#E7E3E7;"></div>
<div class="sk" style="left:494px;top:344px;width:76px;height:20px;background:#E7E3E7;"></div>
<div class="sk" style="left:572px;top:344px;width:69px;height:20px;background:#E7E3E7;"></div>
<div class="sk" style="left:643px;top:344px;width:64px;height:20px;background:#E7E3E7;"></div>
<div class="sk" style="left:708px;top:344px;width:33px;height:20px;background:#E7E3E7;"></div>
<div class="sk" style="left:760px;top:344px;width:66px;height:20px;background:#E7E3E7;"></div>
<div class="cb" style="left:19px;top:348px;background:#D6D3CE;"></div>
<div class="cb" style="left:248px;top:348px;background:#D6D3CE;"></div>
<div class="cb" style="left:280px;top:348px;background:#D6D3CE;"></div>
<div class="cb" style="left:747px;top:348px;background:#D6D3CE;"></div>
<div class="sk" style="left:34px;top:366px;width:58px;height:19px;background:#fff;"></div>
<div class="sk" style="left:94px;top:366px;width:64px;height:19px;background:#fff;"></div>
<div class="sk" style="left:160px;top:366px;width:81px;height:19px;background:#fff;"></div>
<div class="sk" style="left:296px;top:366px;width:68px;height:19px;background:#E7E3E7;"></div>
<div class="sk" style="left:366px;top:366px;width:60px;height:19px;background:#E7E3E7;"></div>
<div class="sk" style="left:428px;top:366px;width:64px;height:19px;background:#E7E3E7;"></div>
<div class="sk" style="left:494px;top:366px;width:76px;height:19px;background:#E7E3E7;"></div>
<div class="sk" style="left:572px;top:366px;width:69px;height:19px;background:#E7E3E7;"></div>
<div class="sk" style="left:643px;top:366px;width:64px;height:19px;background:#E7E3E7;"></div>
<div class="sk" style="left:708px;top:366px;width:33px;height:19px;background:#E7E3E7;"></div>
<div class="sk" style="left:760px;top:366px;width:66px;height:19px;background:#E7E3E7;"></div>
<div class="cb" style="left:19px;top:370px;background:#D6D3CE;"></div>
<div class="cb" style="left:248px;top:370px;background:#D6D3CE;"></div>
<div class="cb" style="left:280px;top:370px;background:#D6D3CE;"></div>
<div class="cb" style="left:747px;top:370px;background:#D6D3CE;"></div>
<div class="sk" style="left:34px;top:387px;width:58px;height:19px;background:#fff;"></div>
<div class="sk" style="left:94px;top:387px;width:64px;height:19px;background:#fff;"></div>
<div class="sk" style="left:160px;top:387px;width:81px;height:19px;background:#fff;"></div>
<div class="sk" style="left:296px;top:387px;width:68px;height:19px;background:#E7E3E7;"></div>
<div class="sk" style="left:366px;top:387px;width:60px;height:19px;background:#E7E3E7;"></div>
<div class="sk" style="left:428px;top:387px;width:64px;height:19px;background:#E7E3E7;"></div>
<div class="sk" style="left:494px;top:387px;width:76px;height:19px;background:#E7E3E7;"></div>
<div class="sk" style="left:572px;top:387px;width:69px;height:19px;background:#E7E3E7;"></div>
<div class="sk" style="left:643px;top:387px;width:64px;height:19px;background:#E7E3E7;"></div>
<div class="sk" style="left:708px;top:387px;width:33px;height:19px;background:#E7E3E7;"></div>
<div class="sk" style="left:760px;top:387px;width:66px;height:19px;background:#E7E3E7;"></div>
<div class="cb" style="left:19px;top:391px;background:#D6D3CE;"></div>
<div class="cb" style="left:248px;top:391px;background:#D6D3CE;"></div>
<div class="cb" style="left:280px;top:391px;background:#D6D3CE;"></div>
<div class="cb" style="left:747px;top:391px;background:#D6D3CE;"></div>
<div class="sk" style="left:34px;top:408px;width:58px;height:20px;background:#fff;"></div>
<div class="sk" style="left:94px;top:408px;width:64px;height:20px;background:#fff;"></div>
<div class="sk" style="left:160px;top:408px;width:81px;height:20px;background:#fff;"></div>
<div class="sk" style="left:296px;top:408px;width:68px;height:20px;background:#E7E3E7;"></div>
<div class="sk" style="left:366px;top:408px;width:60px;height:20px;background:#E7E3E7;"></div>
<div class="sk" style="left:428px;top:408px;width:64px;height:20px;background:#E7E3E7;"></div>
<div class="sk" style="left:494px;top:408px;width:76px;height:20px;background:#E7E3E7;"></div>
<div class="sk" style="left:572px;top:408px;width:69px;height:20px;background:#E7E3E7;"></div>
<div class="sk" style="left:643px;top:408px;width:64px;height:20px;background:#E7E3E7;"></div>
<div class="sk" style="left:708px;top:408px;width:33px;height:20px;background:#E7E3E7;"></div>
<div class="sk" style="left:760px;top:408px;width:66px;height:20px;background:#E7E3E7;"></div>
<div class="cb" style="left:19px;top:412px;background:#D6D3CE;"></div>
<div class="cb" style="left:248px;top:412px;background:#D6D3CE;"></div>
<div class="cb" style="left:280px;top:412px;background:#D6D3CE;"></div>
<div class="cb" style="left:747px;top:412px;background:#D6D3CE;"></div>
<div class="sk" style="left:34px;top:430px;width:58px;height:19px;background:#fff;"></div>
<div class="sk" style="left:94px;top:430px;width:64px;height:19px;background:#fff;"></div>
<div class="sk" style="left:160px;top:430px;width:81px;height:19px;background:#fff;"></div>
<div class="sk" style="left:296px;top:430px;width:68px;height:19px;background:#E7E3E7;"></div>
<div class="sk" style="left:366px;top:430px;width:60px;height:19px;background:#E7E3E7;"></div>
<div class="sk" style="left:428px;top:430px;width:64px;height:19px;background:#E7E3E7;"></div>
<div class="sk" style="left:494px;top:430px;width:76px;height:19px;background:#E7E3E7;"></div>
<div class="sk" style="left:572px;top:430px;width:69px;height:19px;background:#E7E3E7;"></div>
<div class="sk" style="left:643px;top:430px;width:64px;height:19px;background:#E7E3E7;"></div>
<div class="sk" style="left:708px;top:430px;width:33px;height:19px;background:#E7E3E7;"></div>
<div class="sk" style="left:760px;top:430px;width:66px;height:19px;background:#E7E3E7;"></div>
<div class="cb" style="left:19px;top:434px;background:#D6D3CE;"></div>
<div class="cb" style="left:248px;top:434px;background:#D6D3CE;"></div>
<div class="cb" style="left:280px;top:434px;background:#D6D3CE;"></div>
<div class="cb" style="left:747px;top:434px;background:#D6D3CE;"></div>
<div class="sk" style="left:34px;top:451px;width:58px;height:19px;background:#fff;"></div>
<div class="sk" style="left:94px;top:451px;width:64px;height:19px;background:#fff;"></div>
<div class="sk" style="left:160px;top:451px;width:81px;height:19px;background:#fff;"></div>
<div class="sk" style="left:296px;top:451px;width:68px;height:19px;background:#E7E3E7;"></div>
<div class="sk" style="left:366px;top:451px;width:60px;height:19px;background:#E7E3E7;"></div>
<div class="sk" style="left:428px;top:451px;width:64px;height:19px;background:#E7E3E7;"></div>
<div class="sk" style="left:494px;top:451px;width:76px;height:19px;background:#E7E3E7;"></div>
<div class="sk" style="left:572px;top:451px;width:69px;height:19px;background:#E7E3E7;"></div>
<div class="sk" style="left:643px;top:451px;width:64px;height:19px;background:#E7E3E7;"></div>
<div class="sk" style="left:708px;top:451px;width:33px;height:19px;background:#E7E3E7;"></div>
<div class="sk" style="left:760px;top:451px;width:66px;height:19px;background:#E7E3E7;"></div>
<div class="cb" style="left:19px;top:455px;background:#D6D3CE;"></div>
<div class="cb" style="left:248px;top:455px;background:#D6D3CE;"></div>
<div class="cb" style="left:280px;top:455px;background:#D6D3CE;"></div>
<div class="cb" style="left:747px;top:455px;background:#D6D3CE;"></div>
<svg width="12" height="12" style="left:41px;top:478px" viewBox="0 0 12 12" shape-rendering="crispEdges"><rect x="4" y="0" width="4" height="1" fill="#848284"/><rect x="2" y="1" width="2" height="1" fill="#848284"/><rect x="4" y="1" width="4" height="1" fill="#424142"/><rect x="8" y="1" width="2" height="1" fill="#848284"/><rect x="1" y="2" width="1" height="1" fill="#848284"/><rect x="2" y="2" width="2" height="1" fill="#424142"/><rect x="4" y="2" width="4" height="1" fill="#fff"/><rect x="8" y="2" width="2" height="1" fill="#424142"/><rect x="10" y="2" width="1" height="1" fill="#fff"/><rect x="1" y="3" width="1" height="1" fill="#848284"/><rect x="2" y="3" width="1" height="1" fill="#424142"/><rect x="3" y="3" width="6" height="1" fill="#fff"/><rect x="9" y="3" width="1" height="1" fill="#D6D3CE"/><rect x="10" y="3" width="1" height="1" fill="#fff"/><rect x="0" y="4" width="1" height="1" fill="#848284"/><rect x="1" y="4" width="1" height="1" fill="#424142"/><rect x="2" y="4" width="8" height="1" fill="#fff"/><rect x="10" y="4" width="1" height="1" fill="#D6D3CE"/><rect x="11" y="4" width="1" height="1" fill="#fff"/><rect x="0" y="5" width="1" height="1" fill="#848284"/><rect x="1" y="5" width="1" height="1" fill="#424142"/><rect x="2" y="5" width="8" height="1" fill="#fff"/><rect x="10" y="5" width="1" height="1" fill="#D6D3CE"/><rect x="11" y="5" width="1" height="1" fill="#fff"/><rect x="0" y="6" width="1" height="1" fill="#848284"/><rect x="1" y="6" width="1" height="1" fill="#424142"/><rect x="2" y="6" width="8" height="1" fill="#fff"/><rect x="10" y="6" width="1" height="1" fill="#D6D3CE"/><rect x="11" y="6" width="1" height="1" fill="#fff"/><rect x="0" y="7" width="1" height="1" fill="#848284"/><rect x="1" y="7" width="1" height="1" fill="#424142"/><rect x="2" y="7" width="8" height="1" fill="#fff"/><rect x="10" y="7" width="1" height="1" fill="#D6D3CE"/><rect x="11" y="7" width="1" height="1" fill="#fff"/><rect x="1" y="8" width="1" height="1" fill="#848284"/><rect x="2" y="8" width="1" height="1" fill="#424142"/><rect x="3" y="8" width="6" height="1" fill="#fff"/><rect x="9" y="8" width="1" height="1" fill="#D6D3CE"/><rect x="10" y="8" width="1" height="1" fill="#fff"/><rect x="1" y="9" width="1" height="1" fill="#848284"/><rect x="2" y="9" width="2" height="1" fill="#D6D3CE"/><rect x="4" y="9" width="4" height="1" fill="#fff"/><rect x="8" y="9" width="2" height="1" fill="#D6D3CE"/><rect x="10" y="9" width="1" height="1" fill="#fff"/><rect x="2" y="10" width="2" height="1" fill="#fff"/><rect x="4" y="10" width="4" height="1" fill="#D6D3CE"/><rect x="8" y="10" width="2" height="1" fill="#fff"/><rect x="4" y="11" width="4" height="1" fill="#fff"/><rect x="5" y="4" width="2" height="4" fill="#000"/><rect x="4" y="5" width="4" height="2" fill="#000"/></svg>
<svg width="12" height="12" style="left:41px;top:497px" viewBox="0 0 12 12" shape-rendering="crispEdges"><rect x="4" y="0" width="4" height="1" fill="#848284"/><rect x="2" y="1" width="2" height="1" fill="#848284"/><rect x="4" y="1" width="4" height="1" fill="#424142"/><rect x="8" y="1" width="2" height="1" fill="#848284"/><rect x="1" y="2" width="1" height="1" fill="#848284"/><rect x="2" y="2" width="2" height="1" fill="#424142"/><rect x="4" y="2" width="4" height="1" fill="#fff"/><rect x="8" y="2" width="2" height="1" fill="#424142"/><rect x="10" y="2" width="1" height="1" fill="#fff"/><rect x="1" y="3" width="1" height="1" fill="#848284"/><rect x="2" y="3" width="1" height="1" fill="#424142"/><rect x="3" y="3" width="6" height="1" fill="#fff"/><rect x="9" y="3" width="1" height="1" fill="#D6D3CE"/><rect x="10" y="3" width="1" height="1" fill="#fff"/><rect x="0" y="4" width="1" height="1" fill="#848284"/><rect x="1" y="4" width="1" height="1" fill="#424142"/><rect x="2" y="4" width="8" height="1" fill="#fff"/><rect x="10" y="4" width="1" height="1" fill="#D6D3CE"/><rect x="11" y="4" width="1" height="1" fill="#fff"/><rect x="0" y="5" width="1" height="1" fill="#848284"/><rect x="1" y="5" width="1" height="1" fill="#424142"/><rect x="2" y="5" width="8" height="1" fill="#fff"/><rect x="10" y="5" width="1" height="1" fill="#D6D3CE"/><rect x="11" y="5" width="1" height="1" fill="#fff"/><rect x="0" y="6" width="1" height="1" fill="#848284"/><rect x="1" y="6" width="1" height="1" fill="#424142"/><rect x="2" y="6" width="8" height="1" fill="#fff"/><rect x="10" y="6" width="1" height="1" fill="#D6D3CE"/><rect x="11" y="6" width="1" height="1" fill="#fff"/><rect x="0" y="7" width="1" height="1" fill="#848284"/><rect x="1" y="7" width="1" height="1" fill="#424142"/><rect x="2" y="7" width="8" height="1" fill="#fff"/><rect x="10" y="7" width="1" height="1" fill="#D6D3CE"/><rect x="11" y="7" width="1" height="1" fill="#fff"/><rect x="1" y="8" width="1" height="1" fill="#848284"/><rect x="2" y="8" width="1" height="1" fill="#424142"/><rect x="3" y="8" width="6" height="1" fill="#fff"/><rect x="9" y="8" width="1" height="1" fill="#D6D3CE"/><rect x="10" y="8" width="1" height="1" fill="#fff"/><rect x="1" y="9" width="1" height="1" fill="#848284"/><rect x="2" y="9" width="2" height="1" fill="#D6D3CE"/><rect x="4" y="9" width="4" height="1" fill="#fff"/><rect x="8" y="9" width="2" height="1" fill="#D6D3CE"/><rect x="10" y="9" width="1" height="1" fill="#fff"/><rect x="2" y="10" width="2" height="1" fill="#fff"/><rect x="4" y="10" width="4" height="1" fill="#D6D3CE"/><rect x="8" y="10" width="2" height="1" fill="#fff"/><rect x="4" y="11" width="4" height="1" fill="#fff"/></svg>
<span class="t " style="left:58.10px;top:478px;font-size:12px;line-height:14px;color:#000;letter-spacing:0.318px;">Режим корректировки</span>
<span class="t " style="left:58.10px;top:496px;font-size:12px;line-height:14px;color:#000;letter-spacing:0.287px;">Режим ввода</span>
<span class="t " style="left:37.10px;top:518px;font-size:12px;line-height:14px;color:#000;letter-spacing:0.468px;">Данные</span>
<span class="t " style="left:23.00px;top:532px;font-size:12px;line-height:14px;color:#000;letter-spacing:0.199px;">по оператору</span>
<div class="sk" style="left:106px;top:522px;width:76px;height:19px;background:#E7E3E7;"><span class="ft" style="left:0px;top:2px;letter-spacing:0.05px">WATERMAN</span></div>
<span class="t " style="left:194.20px;top:525px;font-size:12px;line-height:14px;color:#000;letter-spacing:0.000px;">с</span>
<div class="sk" style="left:207px;top:522px;width:76px;height:19px;background:#E7E3E7;"></div>
<span class="t " style="left:293.70px;top:525px;font-size:12px;line-height:14px;color:#000;letter-spacing:1.028px;">по</span>
<div class="sk" style="left:315px;top:522px;width:76px;height:19px;background:#E7E3E7;"></div>
<span class="t " style="left:380.25px;top:478px;font-size:12px;line-height:14px;color:#000;letter-spacing:0.122px;">Событие</span>
<span class="t " style="left:519.30px;top:478px;font-size:12px;line-height:14px;color:#000;letter-spacing:-0.367px;">Статус</span>
<span class="t " style="left:641.80px;top:478px;font-size:12px;line-height:14px;color:#000;letter-spacing:-0.009px;">Действие</span>
<div class="sk2" style="left:340px;top:493px;width:128px;height:16px;background:#fff;"><span class="ft" style="left:2px;top:1px;letter-spacing:0.34px">СверкаПоказания</span></div>
<div class="sk2" style="left:471px;top:493px;width:129px;height:16px;background:#fff;"><div style="position:absolute;left:0px;top:0px;width:114px;height:16px;background:#08246B"></div><span class="ft" style="left:1px;top:1px;color:#fff;letter-spacing:0.2px">ПоказаниеСверено</span></div>
<div class="sk2" style="left:603px;top:493px;width:128px;height:16px;background:#fff;"><span class="ft" style="left:2px;top:1px;">Открытие</span></div>
<div class="rb" style="left:743px;top:492px;width:22px;height:20px;"><svg width="22" height="20" viewBox="744 493 22 20" style="left:0px;top:0px"><circle cx="759.0" cy="495.8" r="2.1" fill="#000"/><path d="M757.4 497.8 L752.8 503.4" stroke="#000" stroke-width="4" stroke-linecap="round" fill="none"/><path d="M756.6 497.3 L751.6 497.3 L749.4 498.9" stroke="#000" stroke-width="1.9" fill="none"/><path d="M757.4 498.6 L758.6 501.6 L760.4 503.2" stroke="#000" stroke-width="2.1" fill="none"/><path d="M753.2 503.4 L756.2 505.2 L754.8 507.8 L756.6 508.1" stroke="#000" stroke-width="2.3" fill="none"/><path d="M752.8 503.9 L749.2 504.8 L748.0 504.6 L748.0 502.8" stroke="#000" stroke-width="2.2" fill="none"/><rect x="746" y="495" width="4" height="0.8" fill="#848284"/><rect x="747.5" y="500" width="2.6" height="0.8" fill="#848284"/><rect x="748" y="508" width="3.4" height="0.8" fill="#848284"/></svg></div>
<div class="rb" style="left:778px;top:492px;width:35px;height:20px;"><svg width="34" height="20" viewBox="779 493 34 20" style="left:0px;top:0px"><circle cx="797.6" cy="495.8" r="2.1" fill="#000"/><path d="M796.0 497.8 L791.4 503.4" stroke="#000" stroke-width="4" stroke-linecap="round" fill="none"/><path d="M795.2 497.3 L790.2 497.3 L788.0 498.9" stroke="#000" stroke-width="1.9" fill="none"/><path d="M796.0 498.6 L797.2 501.6 L799.0 503.2" stroke="#000" stroke-width="2.1" fill="none"/><path d="M791.8 503.4 L794.8 505.2 L793.4 507.8 L795.2 508.1" stroke="#000" stroke-width="2.3" fill="none"/><path d="M791.4 503.9 L787.8 504.8 L786.6 504.6 L786.6 502.8" stroke="#000" stroke-width="2.2" fill="none"/><circle cx="809.0" cy="495.8" r="2.1" fill="#000"/><path d="M807.4 497.8 L802.8 503.4" stroke="#000" stroke-width="4" stroke-linecap="round" fill="none"/><path d="M806.6 497.3 L801.6 497.3 L799.4 498.9" stroke="#000" stroke-width="1.9" fill="none"/><path d="M807.4 498.6 L808.6 501.6 L810.4 503.2" stroke="#000" stroke-width="2.1" fill="none"/><path d="M803.2 503.4 L806.2 505.2 L804.8 507.8 L806.6 508.1" stroke="#000" stroke-width="2.3" fill="none"/><path d="M802.8 503.9 L799.2 504.8 L798.0 504.6 L798.0 502.8" stroke="#000" stroke-width="2.2" fill="none"/></svg></div>
<div class="rb" style="left:535px;top:520px;width:73px;height:21px;"></div>
<span class="t " style="left:547.80px;top:524px;font-size:12px;line-height:14px;color:#000;letter-spacing:0.364px;">Закрыть</span>
<div style="position:absolute;left:730px;top:515px;width:136px;height:17px;border:1px solid #000;background:#FFFF18;"></div>
<span class="t " style="left:732.50px;top:518px;font-size:12px;line-height:14px;color:#000;letter-spacing:0.395px;">Провести все объекты</span>
<div style="position:absolute;left:5px;top:755px;width:108px;height:13px;border-top:1px solid #848284;border-left:1px solid #848284;border-right:1px solid #fff;border-bottom:1px solid #fff;"></div>
<div style="position:absolute;left:117px;top:755px;width:134px;height:13px;border-top:1px solid #848284;border-left:1px solid #848284;border-right:1px solid #fff;border-bottom:1px solid #fff;"></div>
<div style="position:absolute;left:255px;top:755px;width:108px;height:13px;border-top:1px solid #848284;border-left:1px solid #848284;border-right:1px solid #fff;border-bottom:1px solid #fff;"></div>
<div style="position:absolute;left:367px;top:755px;width:34px;height:13px;border-top:1px solid #848284;border-left:1px solid #848284;border-right:1px solid #fff;border-bottom:1px solid #fff;"></div>
<div style="position:absolute;left:405px;top:755px;width:36px;height:13px;border-top:1px solid #848284;border-left:1px solid #848284;border-right:1px solid #fff;border-bottom:1px solid #fff;"></div>
<div style="position:absolute;left:445px;top:755px;width:610px;height:13px;border-top:1px solid #848284;border-left:1px solid #848284;border-right:1px solid #fff;border-bottom:1px solid #fff;"></div>
<div class="" style="position:absolute;left:1059px;top:741px;width:2px;height:29px;background:#848284;"></div>
<span class="t " style="left:6.50px;top:756px;font-size:12px;line-height:14px;color:#000;letter-spacing:-0.423px;">Запись: 1/1</span>
<span class="t " style="left:256.50px;top:756px;font-size:12px;line-height:14px;color:#000;letter-spacing:0.000px;transform:scaleX(0.9225);transform-origin:0 0;">Список значений</span>
<span class="t " style="left:368.50px;top:756px;font-size:12px;line-height:14px;color:#000;letter-spacing:0.000px;transform:scaleX(0.8199);transform-origin:0 0;">&lt;OSC&gt;</span>
<span class="t " style="left:406.50px;top:756px;font-size:12px;line-height:14px;color:#000;letter-spacing:0.000px;transform:scaleX(0.8711);transform-origin:0 0;">&lt;DBG&gt;</span>
</body></html>
